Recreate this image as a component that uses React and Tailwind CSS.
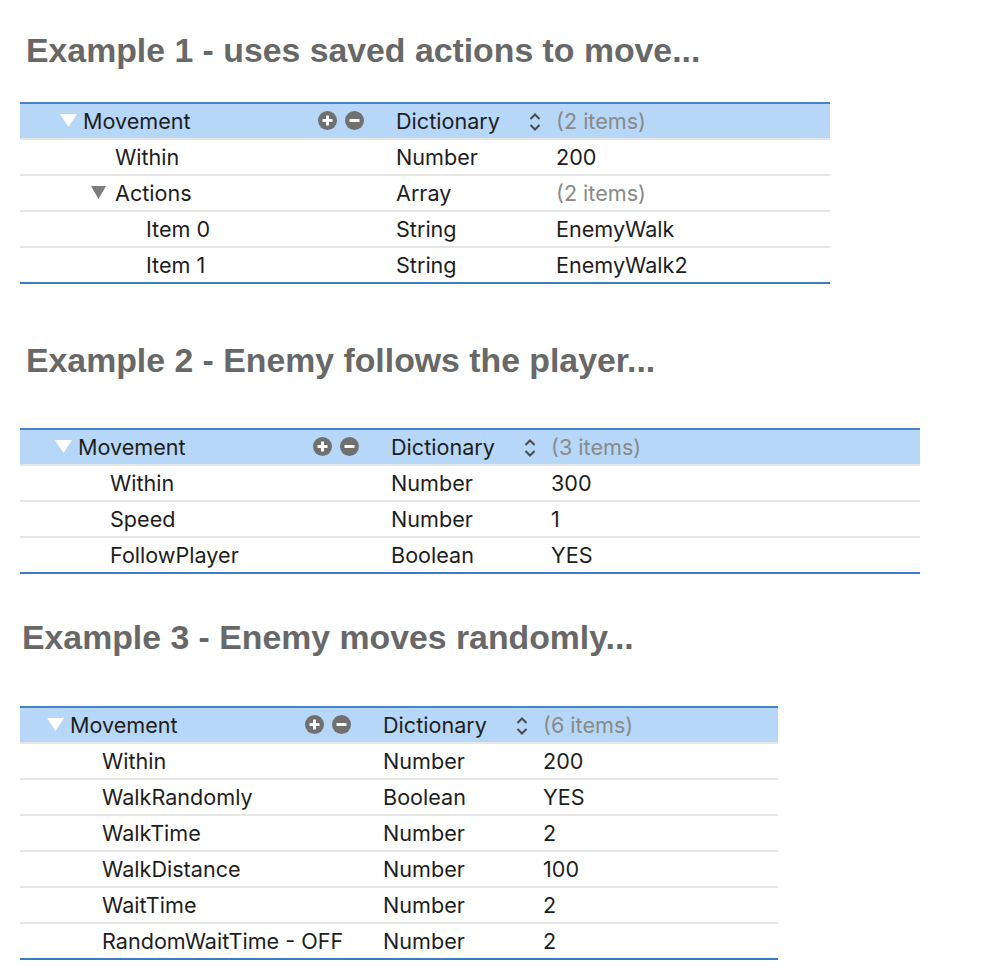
import React from "react";

const HeaderTri = () => (
  <svg width="17" height="13" viewBox="0 0 17 13">
    <polygon points="0,0 17,0 8.5,13" fill="#ffffff" />
  </svg>
);

const GrayTri = () => (
  <svg width="15" height="13" viewBox="0 0 15 13">
    <polygon points="0,0 15,0 7.5,13" fill="#7d7d7d" />
  </svg>
);

const PlusIcon = () => (
  <svg width="19" height="19" viewBox="0 0 19 19">
    <circle cx="9.5" cy="9.5" r="9.5" fill="#707070" />
    <rect x="4.5" y="8" width="10" height="3" rx="0.5" fill="#ffffff" />
    <rect x="8" y="4.5" width="3" height="10" rx="0.5" fill="#ffffff" />
  </svg>
);

const MinusIcon = () => (
  <svg width="19" height="19" viewBox="0 0 19 19">
    <circle cx="9.5" cy="9.5" r="9.5" fill="#707070" />
    <rect x="4.5" y="8" width="10" height="3" rx="0.5" fill="#ffffff" />
  </svg>
);

const Chevron = () => (
  <svg width="12" height="20" viewBox="0 0 12 20">
    <polyline points="1.5,7 6,2.5 10.5,7" fill="none" stroke="#4a4a4a" strokeWidth="2" />
    <polyline points="1.5,13 6,17.5 10.5,13" fill="none" stroke="#4a4a4a" strokeWidth="2" />
  </svg>
);

function Header({ count, padCls }) {
  return (
    <div className={`flex items-center h-[34px] bg-[#b6d7f8] ${padCls}`}>
      <div className="w-[336px] flex items-center">
        <div className="w-[23px] flex items-center">
          <HeaderTri />
        </div>
        <span className="w-[235px]">Movement</span>
        <div className="flex items-center gap-[8px]">
          <PlusIcon />
          <MinusIcon />
        </div>
      </div>
      <span className="w-[131px]">Dictionary</span>
      <div className="w-[29px] flex items-center pl-[2px] pt-[2px]">
        <Chevron />
      </div>
      <span className="text-[#8a8a8a]">({count} items)</span>
    </div>
  );
}

function Row({ name, type, value, level = 1, tri = false, muted = false, padCls }) {
  const pad = level === 2 ? "pl-[86px]" : tri ? "pl-[31px]" : "pl-[55px]";
  return (
    <div className={`flex items-center h-[36px] border-t-2 border-[#e6e6e6] ${padCls}`}>
      <div className={`w-[336px] flex items-center ${pad}`}>
        {tri && (
          <div className="w-[24px] flex items-center">
            <GrayTri />
          </div>
        )}
        <span>{name}</span>
      </div>
      <span className="w-[160px]">{type}</span>
      <span className={muted ? "text-[#8a8a8a]" : ""}>{value}</span>
    </div>
  );
}

function Table({ width, padCls, count, rows }) {
  return (
    <div
      className={`ml-[20px] border-t-2 border-b-2 border-t-[#4683cf] border-b-[#3b7cc8] text-[21.6px] text-[#1e1e1e] ${width}`}
      style={{ fontFamily: "Inter, 'Noto Sans', sans-serif" }}
    >
      <Header count={count} padCls={padCls} />
      {rows.map((r, i) => (
        <Row key={i} {...r} padCls={padCls} />
      ))}
    </div>
  );
}

function Title({ children, ml }) {
  return (
    <div
      className={`h-[40px] leading-[40px] text-[33.8px] font-bold text-[#686868] whitespace-nowrap ${ml}`}
      style={{ fontFamily: "'Liberation Sans', Arial, sans-serif" }}
    >
      {children}
    </div>
  );
}

export default function App() {
  return (
    <div className="w-[988px] h-[976px] bg-white pt-[30px] overflow-hidden">
      <Title ml="ml-[26px]">Example 1 - uses saved actions to move...</Title>
      <div className="mt-[32px]">
        <Table
          width="w-[810px]"
          padCls="pl-[40px]"
          count={2}
          rows={[
            { name: "Within", type: "Number", value: "200" },
            { name: "Actions", type: "Array", value: "(2 items)", tri: true, muted: true },
            { name: "Item 0", type: "String", value: "EnemyWalk", level: 2 },
            { name: "Item 1", type: "String", value: "EnemyWalk2", level: 2 },
          ]}
        />
      </div>
      <div className="mt-[56px]">
        <Title ml="ml-[26px]">Example 2 - Enemy follows the player...</Title>
      </div>
      <div className="mt-[48px]">
        <Table
          width="w-[900px]"
          padCls="pl-[35px]"
          count={3}
          rows={[
            { name: "Within", type: "Number", value: "300" },
            { name: "Speed", type: "Number", value: "1" },
            { name: "FollowPlayer", type: "Boolean", value: "YES" },
          ]}
        />
      </div>
      <div className="mt-[43px]">
        <Title ml="ml-[22px]">Example 3 - Enemy moves randomly...</Title>
      </div>
      <div className="mt-[49px]">
        <Table
          width="w-[758px]"
          padCls="pl-[27px]"
          count={6}
          rows={[
            { name: "Within", type: "Number", value: "200" },
            { name: "WalkRandomly", type: "Boolean", value: "YES" },
            { name: "WalkTime", type: "Number", value: "2" },
            { name: "WalkDistance", type: "Number", value: "100" },
            { name: "WaitTime", type: "Number", value: "2" },
            { name: "RandomWaitTime - OFF", type: "Number", value: "2" },
          ]}
        />
      </div>
    </div>
  );
}
